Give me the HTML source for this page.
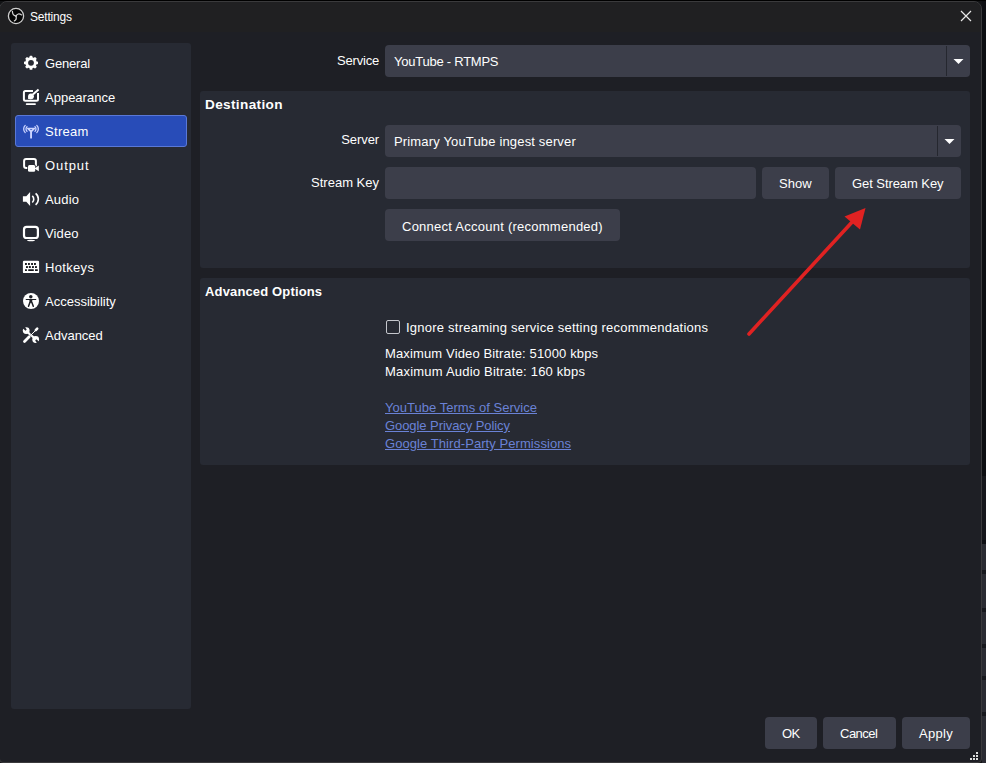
<!DOCTYPE html>
<html><head><meta charset="utf-8">
<style>
*{margin:0;padding:0;box-sizing:border-box}
html,body{width:986px;height:763px;overflow:hidden;background:#111214}
body{font-family:"Liberation Sans",sans-serif;font-size:13px;color:#fefefe;position:relative}
.abs{position:absolute}
.panel{position:absolute;background:#272a33;border-radius:3px}
.t{position:absolute;white-space:nowrap;line-height:16px;height:16px}
.r{text-align:right}
.field{position:absolute;background:#3c3e4a;border-radius:4px}
.btn{position:absolute;background:#3c3e4a;border-radius:4px}
.lk{color:#6a82d6;text-decoration:underline;text-underline-offset:1px}
svg{position:absolute;overflow:visible}
</style></head><body>
<!-- background beyond window -->
<div class="abs" style="left:982px;top:0px;width:4px;height:476px;background:#0d0e12"></div>
<div class="abs" style="left:982px;top:476px;width:4px;height:64px;background:#16171c"></div>
<div class="abs" style="left:982px;top:540px;width:4px;height:4px;background:#0e0f13"></div>
<div class="abs" style="left:982px;top:544px;width:4px;height:219px;background:#2a2b32"></div>
<div class="abs" style="left:982px;top:570px;width:4px;height:4px;background:#17181d"></div>
<div class="abs" style="left:982px;top:608px;width:4px;height:4px;background:#17181d"></div>
<div class="abs" style="left:982px;top:644px;width:4px;height:4px;background:#17181d"></div>
<div class="abs" style="left:982px;top:676px;width:4px;height:4px;background:#17181d"></div>
<div class="abs" style="left:982px;top:712px;width:4px;height:4px;background:#17181d"></div>
<div class="abs" style="left:0;top:0;width:986px;height:1px;background:#000"></div>

<!-- window -->
<div class="abs" style="left:-1px;top:1px;width:983px;height:762px;background:#1e1f25;border:1px solid #3a3a3c;border-radius:8px 8px 4px 4px;overflow:hidden">
  <div class="abs" style="left:0;top:0;width:983px;height:30px;background:#202022"></div>
</div>

<!-- title bar -->
<svg style="left:0;top:0" width="32" height="32" viewBox="0 0 32 32">
<circle cx="16" cy="16" r="7.6" fill="#050505" stroke="#cfcfcf" stroke-width="1.3"/>
<g stroke="#d4d4d4" stroke-width="1.25" fill="none" stroke-linecap="round"><path d="M16 16.1Q12.4 15.6 12.4 11.3"/><path d="M16 16.1Q17.9 12.5 21.6 14.9"/><path d="M16 16.1Q17 19.6 14.4 20.9"/></g>
</svg>
<div class="t" style="left:30px;top:9px;font-size:12px;letter-spacing:-0.2px">Settings</div>
<svg style="left:0;top:0" width="986" height="32"><path d="M961 11L971 21M971 11L961 21" stroke="#e8e8e8" stroke-width="1.2"/></svg>

<!-- sidebar -->
<div class="panel" style="left:11px;top:43px;width:180px;height:666px"></div>
<div class="abs" style="left:15px;top:115px;width:172px;height:32px;background:#284cb8;border:1px solid #5a78d6;border-radius:3px"></div>
<div class="t" style="left:45px;top:56px;letter-spacing:-0.2px">General</div>
<div class="t" style="left:45px;top:90px">Appearance</div>
<div class="t" style="left:45px;top:124px;letter-spacing:0.3px">Stream</div>
<div class="t" style="left:45px;top:158px;letter-spacing:0.9px">Output</div>
<div class="t" style="left:45px;top:192px;letter-spacing:0.2px">Audio</div>
<div class="t" style="left:45px;top:226px;letter-spacing:0.12px">Video</div>
<div class="t" style="left:45px;top:260px;letter-spacing:0.33px">Hotkeys</div>
<div class="t" style="left:45px;top:294px">Accessibility</div>
<div class="t" style="left:45px;top:328px">Advanced</div>

<!-- sidebar icons -->
<svg style="left:18px;top:50px" width="26" height="26" viewBox="0 0 26 26">
<g fill="#fff">
<circle cx="13" cy="12.8" r="5.7"/>
<g id="tooth"><rect x="11.6" y="5.8" width="2.8" height="3" rx="0.6"/></g>
<use href="#tooth" transform="rotate(45 13 12.8)"/><use href="#tooth" transform="rotate(90 13 12.8)"/>
<use href="#tooth" transform="rotate(135 13 12.8)"/><use href="#tooth" transform="rotate(180 13 12.8)"/>
<use href="#tooth" transform="rotate(225 13 12.8)"/><use href="#tooth" transform="rotate(270 13 12.8)"/>
<use href="#tooth" transform="rotate(315 13 12.8)"/>
</g>
<circle cx="13" cy="12.8" r="2.9" fill="#272a33"/>
</svg>
<svg style="left:18px;top:84px" width="26" height="26" viewBox="0 0 26 26">
<path d="M15 7H7.4Q5.9 7 5.9 8.5V15.2Q5.9 16.7 7.4 16.7H18.5Q20 16.7 20 15.2V9" stroke="#fff" stroke-width="2" fill="none"/>
<path d="M14.8 10.6L20.6 5.4" stroke="#fff" stroke-width="2"/>
<circle cx="13" cy="12.3" r="2.9" fill="#fff"/><path d="M10.1 15.1L10.3 12.3L13 15.2Z" fill="#fff"/>
<rect x="7.8" y="19.3" width="10.1" height="1.8" rx="0.8" fill="#fff"/>
</svg>
<svg style="left:18px;top:118px" width="26" height="26" viewBox="0 0 26 26">
<g stroke="#cdd5ff" fill="none" stroke-width="1.3" stroke-linecap="round">
<path d="M9.8 10.5H16.4L13.1 13.7Z" stroke-linejoin="round" stroke-width="1.7"/>
<path d="M7.2 7.4A5 5 0 0 0 7.2 14.6"/><path d="M9 8.8A3.2 3.2 0 0 0 9 13.4"/>
<path d="M18.8 7.4A5 5 0 0 1 18.8 14.6"/><path d="M17 8.8A3.2 3.2 0 0 1 17 13.4"/>
</g>
<rect x="12.1" y="13" width="1.9" height="7.6" rx="0.6" fill="#cdd5ff"/>
</svg>
<svg style="left:18px;top:152px" width="26" height="26" viewBox="0 0 26 26">
<rect x="6.1" y="7" width="11.8" height="8.9" rx="2" stroke="#fff" stroke-width="2" fill="none"/>
<g stroke="#272a33" stroke-width="1.5"><rect x="10" y="13.1" width="7.2" height="6.7" rx="1.5" fill="#272a33"/><path d="M16.5 16.4L20.8 13.6V19.2Z" fill="#272a33"/></g>
<g fill="#fff"><rect x="10" y="13.1" width="7.2" height="6.7" rx="1.5"/><path d="M16.5 16.4L20.8 13.6V19.2Z"/></g>
</svg>
<svg style="left:18px;top:186px" width="26" height="26" viewBox="0 0 26 26">
<path d="M4.9 10.2H8.3L12.1 6V20.1L8.3 15.8H4.9Z" fill="#fff"/>
<path d="M14.3 9.8A4.6 4.6 0 0 1 14.3 16.5" stroke="#fff" stroke-width="1.6" fill="none"/>
<path d="M17.6 7.3A7.5 7.5 0 0 1 17.6 18.9" stroke="#fff" stroke-width="1.6" fill="none"/>
</svg>
<svg style="left:18px;top:220px" width="26" height="26" viewBox="0 0 26 26">
<rect x="6" y="6.9" width="13.9" height="11.1" rx="2.6" stroke="#fff" stroke-width="2.2" fill="none"/>
<ellipse cx="13" cy="20.6" rx="4" ry="0.75" fill="#fff"/>
</svg>
<svg style="left:18px;top:254px" width="26" height="26" viewBox="0 0 26 26">
<rect x="4.9" y="6.8" width="16.2" height="12.3" rx="1.2" fill="#fff"/>
<g fill="#16171b">
<rect x="7" y="9" width="1.9" height="1.9" rx=".3"/><rect x="10" y="9" width="1.9" height="1.9" rx=".3"/><rect x="13.1" y="9" width="1.9" height="1.9" rx=".3"/><rect x="16" y="9" width="1.9" height="1.9" rx=".3"/>
<rect x="8" y="12.1" width="1.9" height="1.9" rx=".3"/><rect x="10.9" y="12.1" width="1.9" height="1.9" rx=".3"/><rect x="14" y="12.1" width="1.9" height="1.9" rx=".3"/><rect x="17" y="12.1" width="1.9" height="1.9" rx=".3"/>
<rect x="7" y="15.2" width="1.9" height="1.9" rx=".3"/><rect x="10.2" y="15.2" width="5.6" height="1.9" rx=".3"/><rect x="17" y="15.2" width="2.8" height="1.9" rx=".3"/>
</g>
</svg>
<svg style="left:18px;top:288px" width="26" height="26" viewBox="0 0 26 26">
<circle cx="13" cy="13" r="8" fill="#fff"/>
<g fill="#1e2026" stroke="#1e2026">
<circle cx="12.8" cy="8.8" r="1.75" stroke="none"/>
<path d="M8.2 11.5H17.8" stroke-width="1.1" stroke-linecap="round"/>
<path d="M11.3 11.3H14.4L14.1 14.8H11.6Z" stroke="none"/>
<path d="M12 14.2L10.5 18.2M13.8 14.2L15.3 18.2" stroke-width="1.5" stroke-linecap="round"/>
</g>
</svg>
<svg style="left:18px;top:322px" width="26" height="26" viewBox="0 0 26 26">
<g fill="#fff" stroke="#fff" stroke-linecap="round">
<circle cx="8.2" cy="8.6" r="3.4" stroke="none"/>
<circle cx="17.7" cy="17.5" r="3.4" stroke="none"/>
<path d="M9.5 10L11.8 12.3" stroke-width="2.2"/>
<path d="M14 14L16.5 16.3" stroke-width="2.2"/>
<path d="M19.2 6.7L17.8 8.1" stroke-width="2.6"/>
<path d="M17.6 8.4L12.4 13.6" stroke-width="1"/>
<path d="M11.2 14.8L6.5 19.5" stroke-width="2.8"/>
</g>
<g fill="#272a33">
<path d="M4.3 5.9L6.4 4L8.7 7.4L7.6 8.8Z"/>
<path d="M21.6 20.1L19.5 22L17.2 18.6L18.3 17.2Z"/>
</g>
</svg>

<!-- service -->
<div class="t r" style="left:279px;width:100px;top:53px;letter-spacing:-0.2px">Service</div>
<div class="field" style="left:385px;top:45px;width:585px;height:32px"></div>
<div class="abs" style="left:946px;top:46px;width:1px;height:30px;background:#25272f"></div>
<svg style="left:0;top:0" width="986" height="160"><path d="M953.5 59H963.5L958.5 64Z" fill="#fff"/><path d="M944.5 139H954.5L949.5 144Z" fill="#fff"/></svg>
<div class="t" style="left:394px;top:54px;letter-spacing:-0.24px">YouTube - RTMPS</div>

<!-- destination -->
<div class="panel" style="left:200px;top:91px;width:770px;height:177px"></div>
<div class="t" style="left:205px;top:97px;font-weight:bold;font-size:13.6px;letter-spacing:0.35px">Destination</div>
<div class="t r" style="left:279px;width:100px;top:132px;letter-spacing:-0.1px">Server</div>
<div class="field" style="left:385px;top:125px;width:576px;height:32px"></div>
<div class="abs" style="left:937px;top:126px;width:1px;height:30px;background:#25272f"></div>
<svg style="left:0;top:0" width="986" height="160"><path d="M944.5 139H954.5L949.5 144Z" fill="#fff"/></svg>
<div class="t" style="left:394px;top:134px;letter-spacing:0.16px">Primary YouTube ingest server</div>
<div class="t r" style="left:279px;width:100px;top:175px">Stream Key</div>
<div class="field" style="left:385px;top:167px;width:371px;height:32px"></div>
<div class="btn" style="left:762px;top:167px;width:67px;height:32px"></div>
<div class="t" style="left:779px;top:176px">Show</div>
<div class="btn" style="left:835px;top:167px;width:126px;height:32px"></div>
<div class="t" style="left:852px;top:176px;letter-spacing:-0.07px">Get Stream Key</div>
<div class="btn" style="left:385px;top:209px;width:235px;height:32px"></div>
<div class="t" style="left:402px;top:219px;letter-spacing:0.25px">Connect Account (recommended)</div>

<!-- advanced -->
<div class="panel" style="left:200px;top:278px;width:770px;height:187px"></div>
<div class="t" style="left:205px;top:284px;font-weight:bold;letter-spacing:0.15px">Advanced Options</div>
<div class="abs" style="left:386px;top:320px;width:14px;height:14px;border:1px solid #c4c6cc;border-radius:2px"></div>
<div class="t" style="left:406px;top:320px;letter-spacing:0.23px">Ignore streaming service setting recommendations</div>
<div class="t" style="left:385px;top:346px;letter-spacing:0.14px">Maximum Video Bitrate: 51000 kbps</div>
<div class="t" style="left:385px;top:364px;letter-spacing:0.21px">Maximum Audio Bitrate: 160 kbps</div>
<div class="t lk" style="left:385px;top:400px;letter-spacing:0.03px">YouTube Terms of Service</div>
<div class="t lk" style="left:385px;top:418px;letter-spacing:-0.07px">Google Privacy Policy</div>
<div class="t lk" style="left:385px;top:436px;letter-spacing:0.07px">Google Third-Party Permissions</div>

<!-- bottom buttons -->
<div class="btn" style="left:765px;top:717px;width:52px;height:32px"></div>
<div class="t" style="left:782px;top:726px;letter-spacing:-0.5px">OK</div>
<div class="btn" style="left:823px;top:717px;width:73px;height:32px"></div>
<div class="t" style="left:840px;top:726px;letter-spacing:-0.5px">Cancel</div>
<div class="btn" style="left:902px;top:717px;width:68px;height:32px"></div>
<div class="t" style="left:919px;top:726px;letter-spacing:0.3px">Apply</div>
<!-- size grip -->
<svg style="left:0;top:0" width="986" height="763"><g fill="#dcdcdc">
<rect x="976" y="752" width="2" height="2"/><rect x="973" y="755" width="2" height="2"/><rect x="976" y="755" width="2" height="2"/>
<rect x="970" y="758" width="2" height="2"/><rect x="973" y="758" width="2" height="2"/><rect x="976" y="758" width="2" height="2"/></g></svg>

<!-- red arrow -->
<svg style="left:0;top:0" width="986" height="763">
<path d="M749 334L854 220" stroke="#e02222" stroke-width="3.6" stroke-linecap="round"/>
<path d="M865.5 208L844.5 216.5L860 229.5Z" fill="#e02222"/>
</svg>
</body></html>
